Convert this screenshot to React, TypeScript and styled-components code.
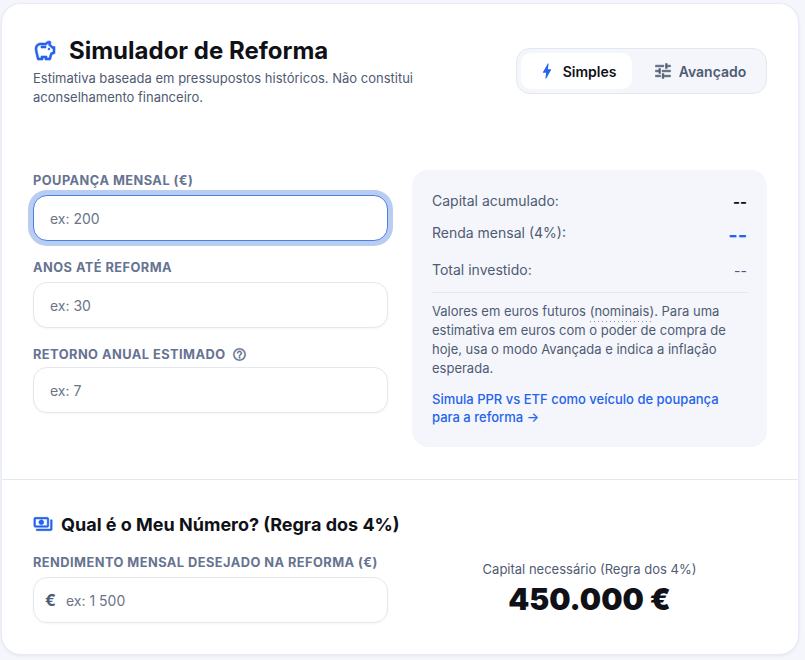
import React from 'react';
import styled, { createGlobalStyle, css } from 'styled-components';
import { MdBolt, MdOutlineHelpOutline, MdOutlinePayments, MdOutlineSavings, MdTune } from 'react-icons/md';

const GlobalStyle = createGlobalStyle`
  html, body {
    margin: 0;
    padding: 0;
    background: #f4f6fb;
    font-family: Inter, "Liberation Sans", sans-serif;
    overflow: hidden;
  }
  * { box-sizing: border-box; }
`;

const App: React.FC = () => (
  <Page>
    <GlobalStyle />
    <Card>
      <TopSection>
        <Header>
          <div>
            <TitleRow>
              <SavingsIcon size={24} />
              <Title>Simulador de Reforma</Title>
            </TitleRow>
            <Subtitle>Estimativa baseada em pressupostos históricos. Não constitui aconselhamento financeiro.</Subtitle>
          </div>
          <Toggle>
            <ToggleButton $active>
              <MdBolt size={20} color="#2563eb" />
              Simples
            </ToggleButton>
            <ToggleButton>
              <TuneIcon size={20} />
              Avançado
            </ToggleButton>
          </Toggle>
        </Header>
        <Columns>
          <Fields>
            <Field>
              <Label>Poupança mensal (€)</Label>
              <Input placeholder="ex: 200" $focused />
            </Field>
            <Field>
              <Label>Anos até reforma</Label>
              <Input placeholder="ex: 30" />
            </Field>
            <Field $tight>
              <Label>
                Retorno anual estimado
                <HelpIcon size={15} />
              </Label>
              <Input placeholder="ex: 7" />
            </Field>
          </Fields>
          <Panel>
            <ResultRow>
              <ResultLabel>Capital acumulado:</ResultLabel>
              <StrongValue>--</StrongValue>
            </ResultRow>
            <ResultRow $tall>
              <ResultLabel>Renda mensal (4%):</ResultLabel>
              <AccentValue>--</AccentValue>
            </ResultRow>
            <ResultRow>
              <ResultLabel>Total investido:</ResultLabel>
              <PlainValue>--</PlainValue>
            </ResultRow>
            <Note>
              Valores em euros futuros <Dotted>(nominais)</Dotted>. Para uma estimativa em euros com o poder de compra de hoje, usa o modo Avançada e indica a inflação esperada.
            </Note>
            <PanelLink href="#">Simula PPR vs ETF como veículo de poupança para a reforma →</PanelLink>
          </Panel>
        </Columns>
      </TopSection>
      <BottomSection>
        <SectionTitleRow>
          <PaymentsIcon size={20} />
          <SectionTitle>Qual é o Meu Número? (Regra dos 4%)</SectionTitle>
        </SectionTitleRow>
        <Columns>
          <Field>
            <Label>Rendimento mensal desejado na reforma (€)</Label>
            <InputWrap>
              <Euro>€</Euro>
              <BareInput placeholder="ex: 1 500" />
            </InputWrap>
          </Field>
          <Needed>
            <NeededLabel>Capital necessário (Regra dos 4%)</NeededLabel>
            <NeededValue>450.000 €</NeededValue>
          </Needed>
        </Columns>
      </BottomSection>
    </Card>
  </Page>
);

export default App;

// thickens the material outlines, skipping their empty bounding path
const thick = css`
  flex-shrink: 0;
  & path { stroke: currentColor; stroke-width: 0.6px; }
  & path[fill='none'] { stroke: none; }
`;

const SavingsIcon = styled(MdOutlineSavings)`
  ${thick}
  color: #2563eb;
`;

const PaymentsIcon = styled(MdOutlinePayments)`
  ${thick}
  color: #2563eb;
`;

const TuneIcon = styled(MdTune)`
  ${thick}
  color: #4f5b73;
`;

const HelpIcon = styled(MdOutlineHelpOutline)`
  ${thick}
  color: #667391;
`;

const Page = styled.div`
  width: 805px;
  height: 660px;
  padding: 3px 6px 0 1px;
`;

const Card = styled.div`
  width: 798px;
  height: 652px;
  background: #ffffff;
  border: 1px solid #e8ecf4;
  border-radius: 20px;
  box-shadow: 0 1px 3px rgba(30, 50, 90, 0.08);
`;

const TopSection = styled.div`
  height: 476px;
  padding: 32px 31px 0;
  border-bottom: 1px solid #e2e8f0;
`;

const Header = styled.div`
  display: flex;
  justify-content: space-between;
  align-items: flex-start;
  height: 134px;
`;

const TitleRow = styled.div`
  display: flex;
  align-items: center;
  gap: 12px;
  height: 30px;
  margin-bottom: 3px;
`;

const Title = styled.h1`
  margin: 0;
  font-size: 24px;
  line-height: 30px;
  font-weight: 700;
  color: #0f1117;
`;

const Subtitle = styled.p`
  margin: 0;
  width: 400px;
  font-size: 13px;
  line-height: 19px;
  color: #4f5b73;
`;

const Toggle = styled.div`
  display: flex;
  width: 251px;
  height: 46px;
  margin-top: 12px;
  padding: 4px;
  background: #f4f6fb;
  border: 1px solid #e2e8f0;
  border-radius: 14px;
`;

const ToggleButton = styled.button<{ $active?: boolean }>`
  flex: ${p => (p.$active ? '0 0 111px' : '1')};
  display: flex;
  align-items: center;
  justify-content: center;
  gap: 6px;
  padding: ${p => (p.$active ? '0' : '0 0 0 5px')};
  border: none;
  border-radius: 10px;
  background: ${p => (p.$active ? '#ffffff' : 'transparent')};
  color: ${p => (p.$active ? '#0f1117' : '#4f5b73')};
  font-family: inherit;
  font-size: 14px;
  font-weight: 600;
`;

const Columns = styled.div`
  display: grid;
  grid-template-columns: 355px 355px;
  gap: 24px;
`;

const Fields = styled.div`
  display: flex;
  flex-direction: column;
  gap: 16px;
`;

const Field = styled.div<{ $tight?: boolean }>`
  display: flex;
  flex-direction: column;
  gap: ${p => (p.$tight ? '3px' : '5px')};
`;

const Label = styled.label`
  display: flex;
  align-items: center;
  gap: 7px;
  height: 20px;
  font-size: 12.8px;
  font-weight: 700;
  letter-spacing: 0.46px;
  text-transform: uppercase;
  color: #667391;
`;

const Input = styled.input<{ $focused?: boolean }>`
  width: 100%;
  height: 46px;
  padding: 0 16px;
  background: #ffffff;
  border: 1px solid ${p => (p.$focused ? '#4a7fe8' : '#e2e8f0')};
  border-radius: 14px;
  box-shadow: ${p => (p.$focused ? '0 0 0 5px #b9cdf1' : '0 1px 2px rgba(30, 50, 90, 0.05)')};
  font-family: inherit;
  font-size: 14px;
  outline: none;
  &::placeholder { color: #6b7488; opacity: 1; }
`;

const Panel = styled.div`
  height: 277px;
  padding: 20px;
  background: #f4f6fb;
  border-radius: 16px;
`;

const ResultRow = styled.div<{ $tall?: boolean }>`
  display: flex;
  justify-content: space-between;
  align-items: ${p => (p.$tall ? 'flex-start' : 'center')};
  height: ${p => (p.$tall ? '28px' : '22px')};
  margin-bottom: ${p => (p.$tall ? '9px' : '10px')};
  &:nth-child(3) { margin-bottom: 11px; }
`;

const ResultLabel = styled.span`
  font-size: 14px;
  line-height: 22px;
  color: #4f5b73;
`;

const StrongValue = styled.span`
  font-size: 15px;
  font-weight: 700;
  color: #0f1117;
`;

const AccentValue = styled.span`
  font-size: 20px;
  line-height: 26px;
  font-weight: 700;
  color: #2563eb;
`;

const PlainValue = styled.span`
  font-size: 14px;
  color: #4f5b73;
`;

const Note = styled.p`
  margin: 0 0 11.5px;
  padding-top: 8.5px;
  border-top: 1px solid #e2e8f0;
  font-size: 13px;
  line-height: 19.2px;
  color: #4f5b73;
`;

const Dotted = styled.span`
  padding-bottom: 3px;
  background: repeating-linear-gradient(to right, #8a94a8 0 1px, transparent 1px 4px) left bottom / 100% 1px no-repeat;
`;

const PanelLink = styled.a`
  display: block;
  font-size: 13px;
  line-height: 18px;
  font-weight: 500;
  color: #2563eb;
  text-decoration: none;
`;

const BottomSection = styled.div`
  padding: 31px 31px 0;
`;

const SectionTitleRow = styled.div`
  display: flex;
  align-items: center;
  gap: 8px;
  height: 26px;
  margin-bottom: 15px;
`;

const SectionTitle = styled.h2`
  margin: 0;
  font-size: 18px;
  font-weight: 700;
  color: #0f1117;
`;

const InputWrap = styled.div`
  display: flex;
  align-items: center;
  gap: 10px;
  height: 46px;
  padding: 0 11px;
  border: 1px solid #e2e8f0;
  border-radius: 14px;
  box-shadow: 0 1px 2px rgba(30, 50, 90, 0.05);
`;

const Euro = styled.span`
  font-size: 16px;
  font-weight: 700;
  color: #4f5b73;
`;

const BareInput = styled.input`
  flex: 1;
  border: none;
  outline: none;
  padding: 0;
  font-family: inherit;
  font-size: 14px;
  &::placeholder { color: #6b7488; opacity: 1; }
`;

const Needed = styled.div`
  display: flex;
  flex-direction: column;
  align-items: center;
  justify-content: center;
  gap: 2px;
  padding-top: 3px;
`;

const NeededLabel = styled.span`
  font-size: 13px;
  line-height: 18px;
  color: #4f5b73;
`;

const NeededValue = styled.span`
  font-size: 30px;
  line-height: 38px;
  font-weight: 900;
  color: #0f1117;
`;
